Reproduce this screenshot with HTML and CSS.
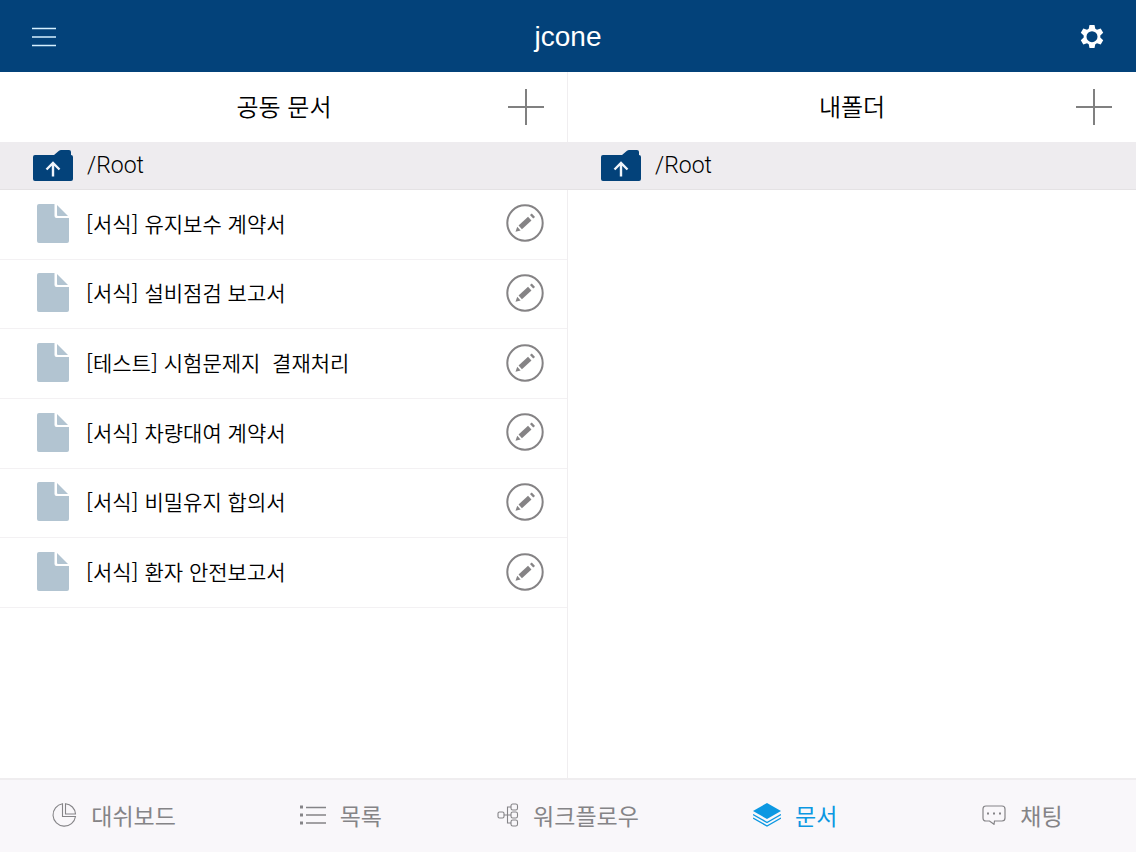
FILE: index.html
```html
<!DOCTYPE html>
<html lang="ko">
<head>
  <meta charset="UTF-8">
  <meta name="viewport" content="width=device-width, initial-scale=1.0">
  <title>jcone</title>
  <link rel="stylesheet" href="styles.css">
</head>
<body>
  <!-- Shared icons -->
  <svg class="icon-defs" aria-hidden="true">
    <symbol id="icon-plus" viewBox="0 0 36 36">
      <path d="M18 0v36M0 18h36" fill="none" stroke="#808080" stroke-width="2"/>
    </symbol>
    <symbol id="icon-folder-up" viewBox="0 0 40 32">
      <path d="M2 5h19l5-4.300q1-.7 2-.7h8q2 0 2 2v3q2 0 2 2v22q0 2-2 2H2q-2 0-2-2V7q0-2 2-2z" fill="#03427a"/>
      <path d="M20 26.500V13M13.500 19.500l6.500-6.500 6.500 6.500" fill="none" stroke="#f0f4fa" stroke-width="2.400"/>
    </symbol>
    <symbol id="icon-file" viewBox="0 0 32 39">
      <path d="M2 0h15.500v12q0 2 2 2H32v23q0 2-2 2H2q-2 0-2-2V2q0-2 2-2z" fill="#b2c4d1"/>
      <path d="M20 1l11 11H21q-1 0-1-1z" fill="#b2c4d1"/>
    </symbol>
    <symbol id="icon-edit" viewBox="0 0 38 38">
      <circle cx="19" cy="19" r="17.700" fill="none" stroke="#858385" stroke-width="2"/>
      <g fill="#858385" transform="translate(19 19) rotate(-43)">
        <path d="M-6.500-2.500H6.500v5H-6.500z"/>
        <path d="M-13 0l4.700-2.500v5z"/>
        <path d="M9-2.400h2.500v4.800H9z"/>
      </g>
    </symbol>
  </svg>

  <header class="header">
    <button class="header-btn" aria-label="메뉴">
      <svg width="24" height="20" viewBox="0 0 24 20" fill="none" stroke="#d5f0ff" stroke-width="1.600">
        <path d="M0 1.500h24M0 10h24M0 18.500h24"/>
      </svg>
    </button>
    <h1>jcone</h1>
    <button class="header-btn" aria-label="설정">
      <svg width="24" height="24" viewBox="0 0 24 24" fill="#fff" fill-rule="evenodd">
        <path d="M9.500 0h5l.8 3.800 1.700 1 3.700-1.300 2.500 4.300-2.900 2.700v2l2.900 2.700-2.500 4.300-3.700-1.300-1.700 1-.8 3.800h-5l-.8-3.800-1.700-1-3.700 1.300-2.500-4.300 2.900-2.700v-2L.8 7.800l2.500-4.300L7 4.800l1.700-1zM12 6.200a5.500 5.500 0 1 0 0 11a5.500 5.500 0 1 0 0-11z"/>
      </svg>
    </button>
  </header>

  <main class="panels">
    <!-- Shared documents -->
    <section class="panel">
      <div class="panel-header">
        <h2>공동 문서</h2>
        <button class="add-btn" aria-label="추가"><svg width="36" height="36"><use href="#icon-plus"/></svg></button>
      </div>
      <a href="#" class="path">
        <svg width="40" height="32"><use href="#icon-folder-up"/></svg>
        <span>/Root</span>
      </a>
      <ul class="doc-list">
        <li class="doc">
          <svg width="32" height="39"><use href="#icon-file"/></svg>
          <a href="#" class="doc-name">[서식] 유지보수 계약서</a>
          <button class="edit-btn" aria-label="편집"><svg width="38" height="38"><use href="#icon-edit"/></svg></button>
        </li>
        <li class="doc">
          <svg width="32" height="39"><use href="#icon-file"/></svg>
          <a href="#" class="doc-name">[서식] 설비점검 보고서</a>
          <button class="edit-btn" aria-label="편집"><svg width="38" height="38"><use href="#icon-edit"/></svg></button>
        </li>
        <li class="doc">
          <svg width="32" height="39"><use href="#icon-file"/></svg>
          <a href="#" class="doc-name">[테스트] 시험문제지  결재처리</a>
          <button class="edit-btn" aria-label="편집"><svg width="38" height="38"><use href="#icon-edit"/></svg></button>
        </li>
        <li class="doc">
          <svg width="32" height="39"><use href="#icon-file"/></svg>
          <a href="#" class="doc-name">[서식] 차량대여 계약서</a>
          <button class="edit-btn" aria-label="편집"><svg width="38" height="38"><use href="#icon-edit"/></svg></button>
        </li>
        <li class="doc">
          <svg width="32" height="39"><use href="#icon-file"/></svg>
          <a href="#" class="doc-name">[서식] 비밀유지 합의서</a>
          <button class="edit-btn" aria-label="편집"><svg width="38" height="38"><use href="#icon-edit"/></svg></button>
        </li>
        <li class="doc">
          <svg width="32" height="39"><use href="#icon-file"/></svg>
          <a href="#" class="doc-name">[서식] 환자 안전보고서</a>
          <button class="edit-btn" aria-label="편집"><svg width="38" height="38"><use href="#icon-edit"/></svg></button>
        </li>
      </ul>
    </section>

    <!-- My folder -->
    <section class="panel">
      <div class="panel-header">
        <h2>내폴더</h2>
        <button class="add-btn" aria-label="추가"><svg width="36" height="36"><use href="#icon-plus"/></svg></button>
      </div>
      <a href="#" class="path">
        <svg width="40" height="32"><use href="#icon-folder-up"/></svg>
        <span>/Root</span>
      </a>
    </section>
  </main>

  <nav class="tabs">
    <a href="#" class="tab">
      <svg width="26" height="24" viewBox="0 0 26 24" fill="none" stroke="currentColor" stroke-width="1.100">
        <path d="M11.500.700A11.300 11.300 0 1 0 24.500 13.500h-13z"/>
        <path d="M14.500.700V11h10A11 11 0 0 0 14.500.700z"/>
      </svg>
      <span>대쉬보드</span>
    </a>
    <a href="#" class="tab">
      <svg width="26" height="20" viewBox="0 0 26 20" fill="none" stroke="currentColor" stroke-width="1.400">
        <path d="M6 2.500h20M6 10h20M6 18h20"/>
        <path d="M0 2h3M0 10h3M0 18h3" stroke-width="3"/>
      </svg>
      <span>목록</span>
    </a>
    <a href="#" class="tab">
      <svg width="22" height="24" viewBox="0 0 22 24" fill="none" stroke="currentColor" stroke-width="1.100">
        <rect x="1" y="9" width="6" height="6" rx="1.500"/>
        <rect x="14" y="1" width="6.500" height="6" rx="1.800"/>
        <rect x="14" y="9" width="6.500" height="6" rx="1.800"/>
        <rect x="14" y="17" width="6.500" height="6" rx="1.800"/>
        <path d="M7 12h7M14 4h-3.500v16H14"/>
      </svg>
      <span>워크플로우</span>
    </a>
    <a href="#" class="tab active">
      <svg width="28" height="24" viewBox="0 0 28 24" fill="none" stroke="currentColor" stroke-width="1.400">
        <path d="M14 0l14 8-14 8L0 8z" fill="currentColor" stroke="none"/>
        <path d="M0 11.500l14 8 14-8M0 15l14 8 14-8"/>
      </svg>
      <span>문서</span>
    </a>
    <a href="#" class="tab">
      <svg width="24" height="20" viewBox="0 0 24 20" fill="none" stroke="currentColor" stroke-width="1.200">
        <path d="M4 1h16q3 0 3 3v9q0 3-3 3h-7.500l-.5 3.300L7.500 16H4q-3 0-3-3V4q0-3 3-3z"/>
        <path d="M5 8.500h2M11 8.500h2M17 8.500h2" stroke-width="2"/>
      </svg>
      <span>채팅</span>
    </a>
  </nav>
</body>
</html>
```
FILE: styles.css
```css
* {
  margin: 0;
  padding: 0;
  box-sizing: border-box;
}

body {
  display: flex;
  flex-direction: column;
  min-height: 100vh;
  font-family: 'Noto Sans CJK KR', sans-serif;
  font-weight: 350;
  background: #fff;
  color: #000;
}

a {
  color: inherit;
  text-decoration: none;
}

button {
  display: flex;
  align-items: center;
  justify-content: center;
  background: none;
  border: none;
  cursor: pointer;
}

svg {
  display: block;
  flex-shrink: 0;
}

.icon-defs {
  position: absolute;
  width: 0;
  height: 0;
}

.header {
  display: flex;
  align-items: center;
  justify-content: space-between;
  height: 72px;
  padding: 1px 24px 0;
  background: #03427a;
  color: #fff;
}

.header-btn {
  width: 40px;
  height: 40px;
}

.header h1 {
  font-family: 'Liberation Sans', sans-serif;
  font-size: 28px;
  font-weight: 400;
  line-height: 34px;
}

.panels {
  display: grid;
  grid-template-columns: 1fr 1fr;
  flex: 1;
}

.panel:first-child {
  border-right: 1px solid #f0eef0;
}

.panel-header {
  display: grid;
  grid-template-columns: 1fr auto 1fr;
  align-items: center;
  height: 70px;
  padding: 0 24px;
}

.panel:first-child .panel-header {
  padding-right: 23px;
}

.panel-header h2 {
  grid-column: 2;
  padding-bottom: 2px;
  font-size: 24px;
  font-weight: inherit;
  line-height: 36px;
}

.add-btn {
  justify-self: end;
}

.path {
  display: flex;
  align-items: center;
  gap: 14px;
  height: 48px;
  padding: 0 33px;
  background: #eeecef;
  border-bottom: 1px solid #e4e2e4;
  font-family: Roboto, sans-serif;
  font-size: 23px;
  font-weight: 300;
}

.panel:first-child .path {
  margin-right: -1px;
}

.doc-list {
  display: grid;
  grid-auto-rows: 1fr;
  min-height: 418px;
  list-style: none;
}

.doc {
  display: flex;
  align-items: center;
  gap: 17px;
  padding: 0 23px 2px 37px;
  border-bottom: 1px solid #f3f1f3;
}

.doc-name {
  flex: 1;
  padding-bottom: 1px;
  font-size: 21px;
  line-height: 32px;
  white-space: pre;
}

.tabs {
  display: grid;
  grid-template-columns: repeat(5, 1fr);
  height: 74px;
  padding-bottom: 2px;
  background: #f9f7fa;
  border-top: 2px solid #efedef;
}

.tab {
  display: flex;
  align-items: center;
  justify-content: center;
  gap: 14px;
  font-size: 23px;
  font-weight: 400;
  color: #858487;
}

.tab.active {
  color: #0c98e2;
}
```
